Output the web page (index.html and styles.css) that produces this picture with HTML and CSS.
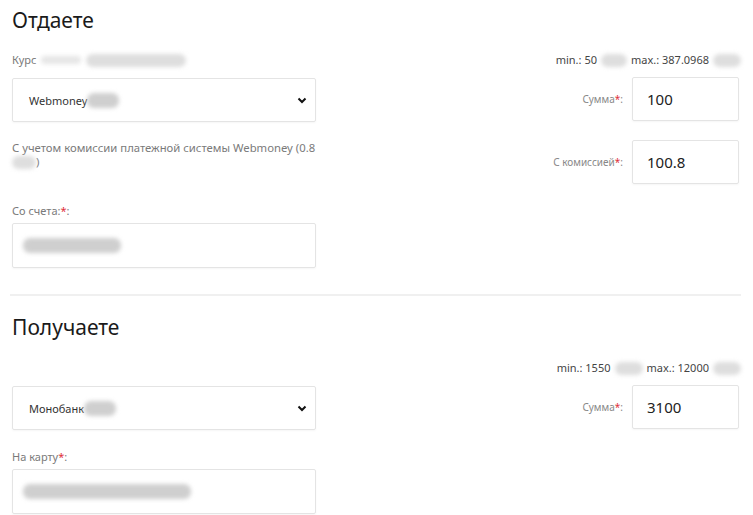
FILE: index.html
```html
<!DOCTYPE html>
<html lang="ru">
<head>
<meta charset="utf-8">
<link rel="stylesheet" href="styles.css">
</head>
<body>
<div class="page">
  <section class="section">
    <h2 class="title">Отдаете</h2>
    <div class="grid">
      <div class="cell">
        <div class="label">Курс <span class="blur faint w40"></span><span class="blur light w100"></span></div>
        <div class="select-wrap">
          <div class="select"><span>Webmoney</span><span class="blur mid w32"></span></div>
          <svg class="chevron" width="10" height="7" viewBox="0 0 10 7"><path d="M1.5 1.5 L5 5 L8.5 1.5" fill="none" stroke="#111" stroke-width="2"/></svg>
        </div>
      </div>
      <div class="cell right">
        <div class="limits">min.: 50 <span class="blur light w26"></span> max.: 387.0968 <span class="blur light w28"></span></div>
        <div class="amount">
          <span class="small-label">Сумма<span class="req">*</span>:</span>
          <div class="num">100</div>
        </div>
      </div>

      <div class="cell">
        <div class="note">С учетом комиссии платежной системы Webmoney (0.8<br><span class="blur light w24"></span>)</div>
      </div>
      <div class="cell right">
        <div class="amount first">
          <span class="small-label">С комиссией<span class="req">*</span>:</span>
          <div class="num">100.8</div>
        </div>
      </div>

      <div class="cell shift">
        <div class="label gap">Со счета:<span class="req">*</span>:</div>
        <div class="text-input"><span class="blur mid w98"></span></div>
      </div>
      <div class="cell"></div>
    </div>
  </section>

  <hr class="divider">

  <section class="section">
    <h2 class="title">Получаете</h2>
    <div class="grid second">
      <div class="cell">
        <div class="label"></div>
        <div class="select-wrap">
          <div class="select"><span>Монобанк</span><span class="blur mid w32"></span></div>
          <svg class="chevron" width="10" height="7" viewBox="0 0 10 7"><path d="M1.5 1.5 L5 5 L8.5 1.5" fill="none" stroke="#111" stroke-width="2"/></svg>
        </div>
      </div>
      <div class="cell right">
        <div class="limits">min.: 1550 <span class="blur light w28"></span> max.: 12000 <span class="blur light w28"></span></div>
        <div class="amount">
          <span class="small-label">Сумма<span class="req">*</span>:</span>
          <div class="num">3100</div>
        </div>
      </div>

      <div class="cell shift">
        <div class="label gap">На карту<span class="req">*</span>:</div>
        <div class="text-input"><span class="blur mid w168"></span></div>
      </div>
      <div class="cell"></div>
    </div>
  </section>
</div>
</body>
</html>
```
FILE: styles.css
```css
* { box-sizing: border-box; }
html, body { margin: 0; background: #fff; }
body {
  font-family: "Noto Sans", "Lato", "Liberation Sans", sans-serif;
  color: #222;
  width: 753px;
  height: 515px;
  overflow: hidden;
}
.page { padding: 8px 14px 0 12px; }
.title {
  margin: 0;
  font-size: 21px;
  line-height: 24px;
  font-weight: 400;
  color: #1a1a1a;
}
.grid {
  display: grid;
  grid-template-columns: 304px 1fr;
  row-gap: 18px;
  margin-top: 21px;
}
.grid.second { margin-top: 22px; }
.cell { display: flex; flex-direction: column; }
.cell.right { align-items: flex-end; }
.cell.shift { margin-top: 2px; }
.label {
  font-size: 11px;
  line-height: 14px;
  height: 14px;
  color: #7a7a7a;
  display: flex;
  align-items: center;
  white-space: pre;
}
.label .faint { margin: 0 5px 0 2px; }
.label.gap { margin-bottom: 5px; }
.req { color: #e0303a; }
.select-wrap { position: relative; margin-top: 11px; }
.select {
  height: 44px;
  border: 1px solid #e4e4e4;
  border-radius: 2px;
  box-shadow: 0 1px 2px rgba(0,0,0,0.04);
  display: flex;
  align-items: center;
  padding-left: 16px;
  font-size: 11px;
  color: #333;
}
.chevron { position: absolute; right: 9px; top: 19px; }
.limits {
  font-size: 11px;
  line-height: 14px;
  height: 14px;
  color: #444;
  display: flex;
  align-items: center;
  gap: 4px;
  margin-right: -2px;
}
.amount {
  display: flex;
  align-items: center;
  gap: 9px;
  margin-top: 10px;
}
.amount.first { margin-top: 0; }
.small-label { font-size: 10px; color: #888; }
.num {
  width: 107px;
  height: 44px;
  border: 1px solid #e4e4e4;
  border-radius: 2px;
  box-shadow: 0 1px 2px rgba(0,0,0,0.04);
  display: flex;
  align-items: center;
  padding-left: 14px;
  font-size: 15px;
  color: #222;
}
.note {
  font-size: 11.3px;
  line-height: 14px;
  color: #7a7a7a;
  padding-top: 1px;
}
.text-input {
  height: 45px;
  border: 1px solid #e4e4e4;
  border-radius: 2px;
  box-shadow: 0 1px 2px rgba(0,0,0,0.04);
  display: flex;
  align-items: center;
  padding-left: 10px;
}
.blur {
  display: inline-block;
  height: 13px;
  border-radius: 7px;
  filter: blur(2px);
  vertical-align: middle;
}
.faint { background: #e6e6e6; height: 8px; }
.light { background: #dedede; }
.mid { background: #cfcfcf; height: 15px; }
.w24 { width: 24px; }
.w26 { width: 26px; }
.w28 { width: 28px; }
.w32 { width: 32px; }
.w40 { width: 40px; }
.w98 { width: 98px; }
.w100 { width: 100px; }
.w168 { width: 168px; }
.divider {
  border: 0;
  border-top: 2px solid #f0f0f0;
  margin: 26px -2px 19px -2px;
}
```
